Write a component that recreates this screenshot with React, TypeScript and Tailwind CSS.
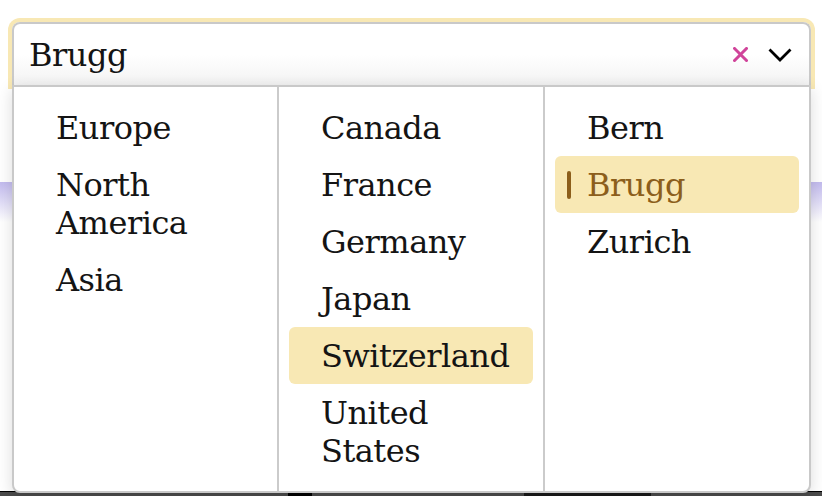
const continents = ["Europe", "North America", "Asia"];
const countries = ["Canada", "France", "Germany", "Japan", "Switzerland", "United States"];
const cities = ["Bern", "Brugg", "Zurich"];

function Option({ label, active, selected }: { label: string; active?: boolean; selected?: boolean }) {
  return (
    <li
      className={`relative mx-[10px] rounded-[6px] py-[9.5px] pl-[32px] pr-4 ${
        active || selected ? "bg-[#f8e8b4]" : ""
      } ${selected ? "text-[#8c5e1b]" : "text-[#141414]"}`}
    >
      {selected && (
        <span className="absolute left-[12px] top-1/2 h-[28px] w-[4px] -translate-y-1/2 rounded-full bg-[#8c5e1b]" />
      )}
      {label}
    </li>
  );
}

export default function App() {
  return (
    <div
      className="relative flex h-[496px] w-[822px] flex-col overflow-hidden bg-white text-[32px] leading-[38px] tracking-[-0.5px]"
      style={{ fontFamily: '"DejaVu Serif", serif' }}
    >
      <div className="relative z-10 pl-[12px] pr-[11px] pt-[22px]">
        {/* input */}
        <div className="flex h-[63px] items-center rounded-t-[8px] border-2 border-b-0 border-[#c9c9c9] bg-gradient-to-b from-white via-white to-[#f3f3f3] pl-[15px] pr-[17px] shadow-[0_0_0_4px_#f8e8b4]">
          <span className="flex-1 text-[#141414]">Brugg</span>
          <svg width="15" height="15" viewBox="0 0 15 15" className="mr-[20px] -mt-[1px]">
            <path d="M1.5 1.5L13.5 13.5M13.5 1.5L1.5 13.5" stroke="#d0449a" strokeWidth="3" strokeLinecap="square" />
          </svg>
          <svg width="24" height="14" viewBox="0 0 24 14">
            <path d="M1.5 1.5L12 12L22.5 1.5" stroke="#000" strokeWidth="2.8" fill="none" />
          </svg>
        </div>

        {/* menu */}
        <div className="absolute left-[12px] right-[11px] top-full grid grid-cols-[265px_266px_1fr] divide-x-2 divide-[#cbcbcb] rounded-b-[8px] border-2 border-[#c9c9c9] bg-white shadow-[0_4px_16px_rgba(0,0,0,0.14)]">
          <ul className="py-[12px]">
            {continents.map((c) => (
              <Option key={c} label={c} />
            ))}
          </ul>
          <ul className="py-[12px]">
            {countries.map((c) => (
              <Option key={c} label={c} active={c === "Switzerland"} />
            ))}
          </ul>
          <ul className="py-[12px]">
            {cities.map((c) => (
              <Option key={c} label={c} selected={c === "Brugg"} />
            ))}
          </ul>
        </div>
      </div>

      {/* page behind the menu */}
      <div className="h-[97px]" />
      <div className="h-[40px] bg-gradient-to-b from-[#c3bbee] to-white" />
      <div className="flex-1" />
      <div className="flex h-[5px] border-t border-black bg-[#4b4b4b]">
        <div className="w-[288px]" />
        <div className="w-[24px] bg-black" />
        <div className="w-[212px]" />
        <div className="w-[127px] bg-[#1a1a1a]" />
      </div>
    </div>
  );
}
